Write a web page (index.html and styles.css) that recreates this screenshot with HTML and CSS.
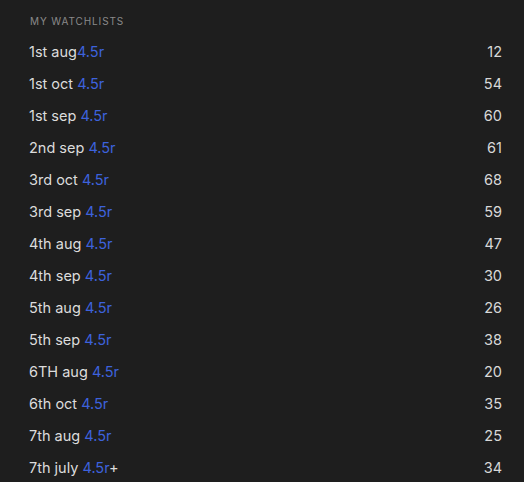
FILE: index.html
```html
<!DOCTYPE html>
<html>
<head><meta charset="utf-8"><link rel="stylesheet" href="styles.css"></head>
<body>
<div class="panel">
  <div class="title">MY WATCHLISTS</div>
  <ul class="list">
    <li class="row"><span class="name">1st aug<span class="tag">4.5r</span></span><span class="count">12</span></li>
    <li class="row"><span class="name">1st oct <span class="tag">4.5r</span></span><span class="count">54</span></li>
    <li class="row"><span class="name">1st sep <span class="tag">4.5r</span></span><span class="count">60</span></li>
    <li class="row"><span class="name">2nd sep <span class="tag">4.5r</span></span><span class="count">61</span></li>
    <li class="row"><span class="name">3rd oct <span class="tag">4.5r</span></span><span class="count">68</span></li>
    <li class="row"><span class="name">3rd sep <span class="tag">4.5r</span></span><span class="count">59</span></li>
    <li class="row"><span class="name">4th aug <span class="tag">4.5r</span></span><span class="count">47</span></li>
    <li class="row"><span class="name">4th sep <span class="tag">4.5r</span></span><span class="count">30</span></li>
    <li class="row"><span class="name">5th aug <span class="tag">4.5r</span></span><span class="count">26</span></li>
    <li class="row"><span class="name">5th sep <span class="tag">4.5r</span></span><span class="count">38</span></li>
    <li class="row"><span class="name">6TH aug <span class="tag">4.5r</span></span><span class="count">20</span></li>
    <li class="row"><span class="name">6th oct <span class="tag">4.5r</span></span><span class="count">35</span></li>
    <li class="row"><span class="name">7th aug <span class="tag">4.5r</span></span><span class="count">25</span></li>
    <li class="row"><span class="name">7th july <span class="tag">4.5r</span>+</span><span class="count">34</span></li>
  </ul>
</div>
</body>
</html>
```
FILE: styles.css
```css
html, body {
  margin: 0;
  padding: 0;
  background: #1e1e1e;
  height: 100%;
  overflow: hidden;
}
body {
  font-family: Inter, "Noto Sans", sans-serif;
  color: #dcdcdc;
}
.panel {
  padding: 14px 22px 0 29px;
}
.title {
  font-size: 10px;
  letter-spacing: 0.9px;
  color: #8a8a8a;
  line-height: 14px;
  margin-bottom: 7px;
  padding-left: 1px;
}
.list {
  list-style: none;
  margin: 0;
  padding: 0;
}
.row {
  display: flex;
  justify-content: space-between;
  align-items: center;
  height: 32px;
  font-size: 14.5px;
}
.tag {
  color: #3d62dc;
}
.count {
  color: #d8d8d8;
}
```
